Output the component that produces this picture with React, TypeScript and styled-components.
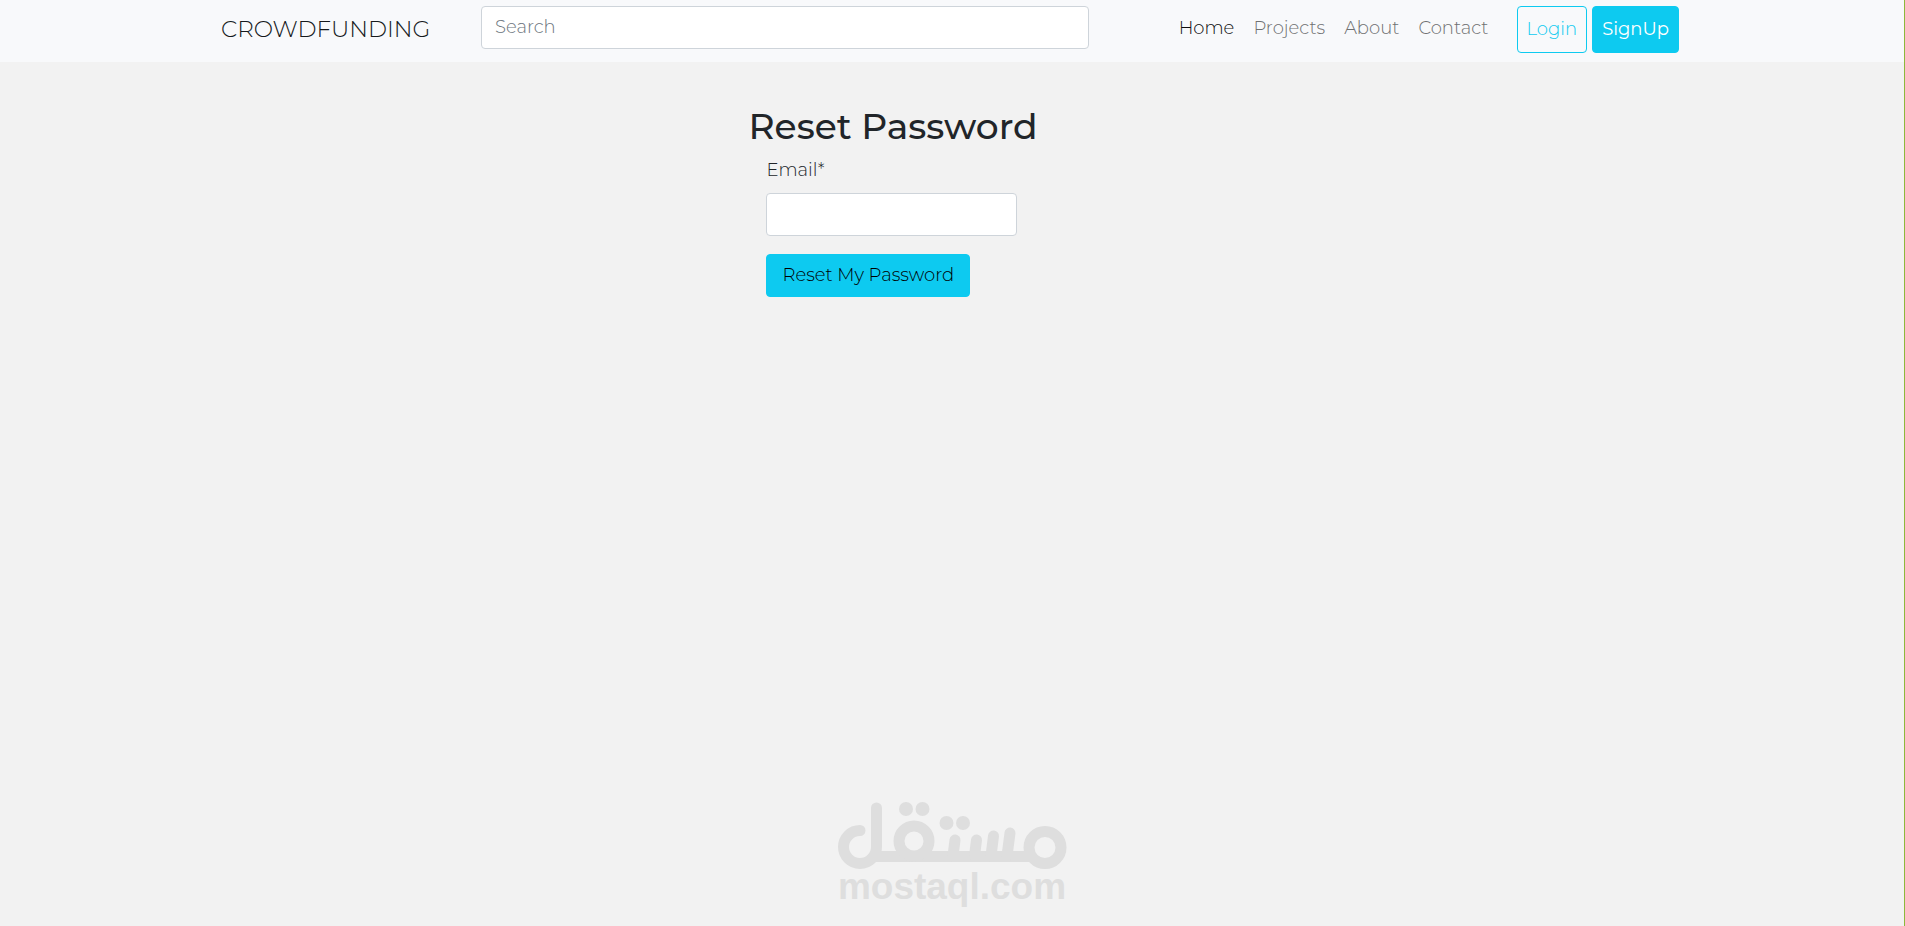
import React from "react";
import styled, { createGlobalStyle, css } from "styled-components";

const GlobalStyle = createGlobalStyle`
  *, *::before, *::after { box-sizing: border-box; }
  body {
    margin: 0;
    background: #f2f2f2;
    color: #212529;
    font-family: Montserrat, Inter, "Liberation Sans", sans-serif;
    font-size: 18px;
    font-weight: 300;
    line-height: 27px;
  }
`;

const Page = styled.div`
  display: flex;
  flex-direction: column;
  min-height: 100vh;
  border-right: 1px solid #8cb83c;
`;

const Navbar = styled.header`
  background: #f8f9fb;
  padding: 6px 20px 9px 16px;
`;

const NavInner = styled.div`
  display: flex;
  align-items: flex-start;
  max-width: 1458px;
  margin: 0 auto;
`;

const Brand = styled.a`
  flex: none;
  width: 260px;
  padding: 6px 0;
  color: #16191c;
  font-size: 23px;
  line-height: 34px;
  text-decoration: none;
`;

const fieldStyle = css`
  display: block;
  height: 43px;
  padding: 0 13px 2px;
  border: 1px solid #ced4da;
  border-radius: 4px;
  background: #fff;
  color: #212529;
  font: inherit;
  &::placeholder { color: #6c757d; opacity: 1; }
`;

const SearchForm = styled.form`
  flex: 1;
  max-width: 608px;
`;

const SearchField = styled.input`
  ${fieldStyle}
  width: 100%;
`;

const Menu = styled.nav`
  display: flex;
  gap: 19px;
  margin-left: auto;
  padding: 9px 28px 0 0;
`;

const MenuLink = styled.a<{ $active?: boolean }>`
  color: ${(p) => (p.$active ? "#0c0c0d" : "#6f7071")};
  text-decoration: none;
`;

const Actions = styled.div`
  display: flex;
  gap: 5px;
`;

const ActionLink = styled.a<{ $filled?: boolean }>`
  display: block;
  padding: 9px;
  border: 1px solid #0dcaf0;
  border-radius: 4px;
  background: ${(p) => (p.$filled ? "#0dcaf0" : "transparent")};
  color: ${(p) => (p.$filled ? "#fff" : "#0dcaf0")};
  font-weight: ${(p) => (p.$filled ? 400 : 300)};
  text-decoration: none;
`;

const Main = styled.main`
  flex: 1;
  width: fit-content;
  margin: 0 auto;
  padding: 43px 118px 0 0;
`;

const Title = styled.h1`
  margin: 0 0 9px;
  font-size: 36px;
  font-weight: 500;
  line-height: 43px;
`;

const ResetForm = styled.form`
  display: flex;
  flex-direction: column;
  align-items: flex-start;
  padding: 0 18px;
`;

const Label = styled.label`
  margin-bottom: 9px;
`;

const EmailField = styled.input`
  ${fieldStyle}
  width: 251px;
  margin-bottom: 18px;
`;

const SubmitButton = styled.button`
  height: 43px;
  padding: 0 15px;
  border: 1px solid #0dcaf0;
  border-radius: 4px;
  background: #0dcaf0;
  color: #000;
  font: inherit;
  cursor: pointer;
`;

const Footer = styled.footer`
  display: flex;
  justify-content: center;
  padding-bottom: 17px;
`;

const Logo = styled.svg`
  display: block;
  width: 230px;
  height: 108px;
`;

function MostaqlLogo() {
  return (
    <Logo viewBox="-1 0 230 108" role="img" aria-label="mostaql.com">
      <g fill="none" stroke="#dedede" strokeWidth="11" strokeLinecap="round">
        <path d="M22 29.500A16.500 16.500 0 1 0 38.500 46V7" />
        <path d="M36 55.500H196" strokeLinecap="butt" />
        <circle cx="76" cy="40" r="15" />
        <circle cx="207" cy="46.500" r="16" />
        <path d="M117 39L115 55M138.500 39L136.500 55M155.500 35L153 55M172 32L169 55" />
      </g>
      <g fill="#dedede">
        <circle cx="68" cy="8" r="7" />
        <circle cx="84.500" cy="8" r="7" />
        <circle cx="108.500" cy="22" r="7" />
        <circle cx="125" cy="22" r="7" />
        <text
          x="114"
          y="98"
          textAnchor="middle"
          fontFamily="Liberation Sans"
          fontWeight="700"
          fontSize="37"
        >
          mostaql.com
        </text>
      </g>
    </Logo>
  );
}

export default function App() {
  return (
    <>
      <GlobalStyle />
      <Page>
        <Navbar>
          <NavInner>
            <Brand href="#">CROWDFUNDING</Brand>
            <SearchForm role="search">
              <SearchField type="search" placeholder="Search" aria-label="Search" />
            </SearchForm>
            <Menu>
              <MenuLink href="#" $active aria-current="page">Home</MenuLink>
              <MenuLink href="#">Projects</MenuLink>
              <MenuLink href="#">About</MenuLink>
              <MenuLink href="#">Contact</MenuLink>
            </Menu>
            <Actions>
              <ActionLink href="#">Login</ActionLink>
              <ActionLink href="#" $filled>SignUp</ActionLink>
            </Actions>
          </NavInner>
        </Navbar>
        <Main>
          <Title>Reset Password</Title>
          <ResetForm>
            <Label htmlFor="email">Email*</Label>
            <EmailField id="email" type="email" />
            <SubmitButton type="button">Reset My Password</SubmitButton>
          </ResetForm>
        </Main>
        <Footer>
          <MostaqlLogo />
        </Footer>
      </Page>
    </>
  );
}
